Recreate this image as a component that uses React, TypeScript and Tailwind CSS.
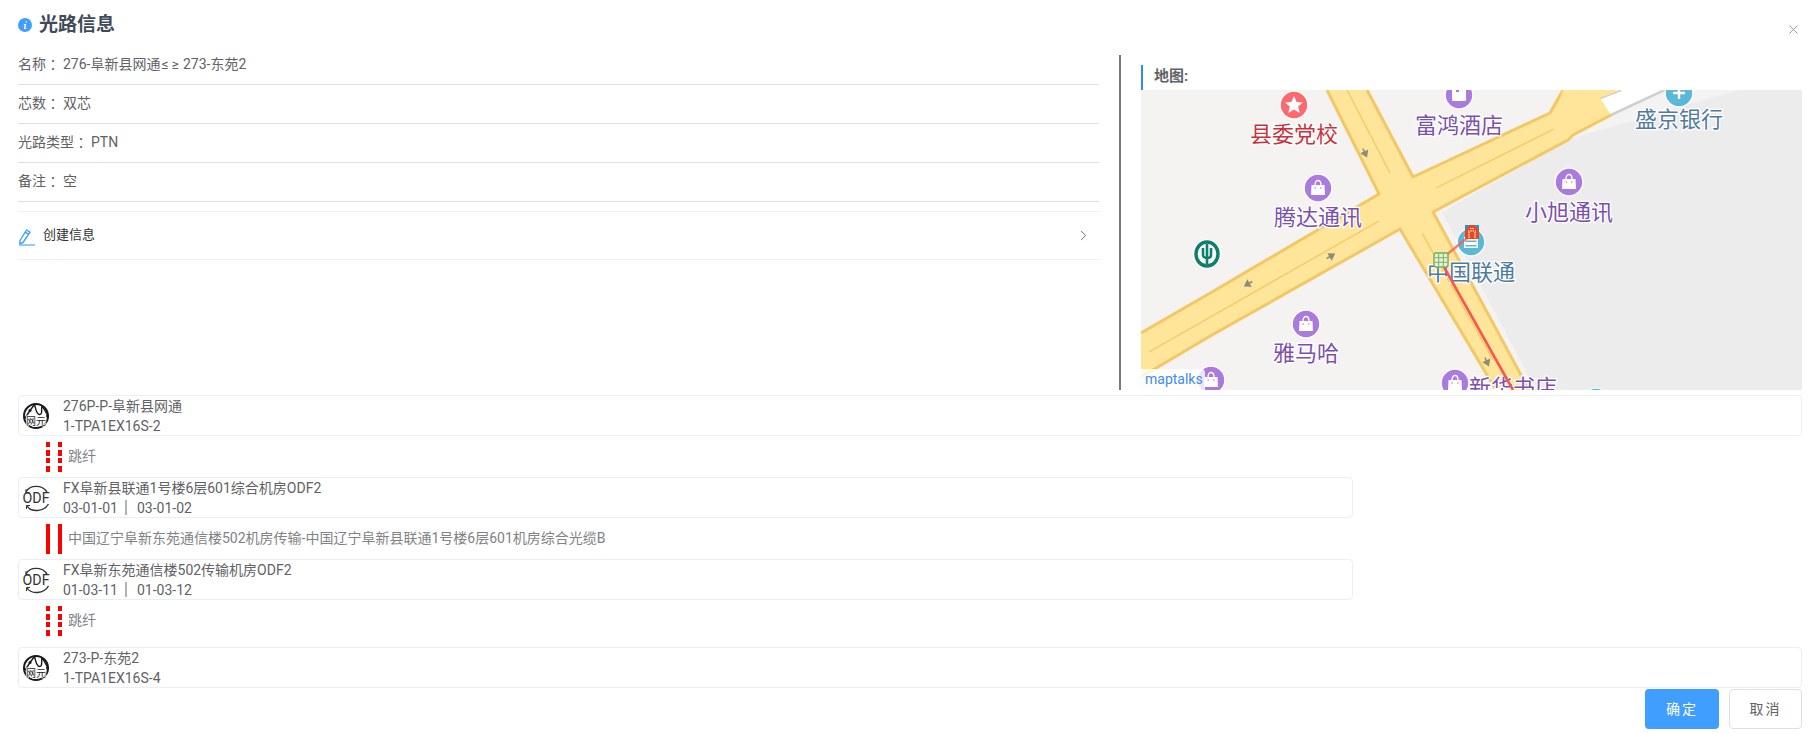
import React from "react";
import { X, ChevronRight } from "lucide-react";

const FONT = `Roboto, "Noto Sans CJK SC", sans-serif`;

function Poi({ x, y, c, glyph }: { x: number; y: number; c: string; glyph: "bag" | "bed" | "star" | "plus" | "card" }) {
  return (
    <g transform={`translate(${x} ${y})`}>
      <circle r={14.5} fill="#fff" opacity={0.9} />
      <circle r={13.2} fill={c} />
      {glyph === "bag" && (
        <g>
          <path d="M-6.5 -3 H6.5 L7 7 H-7 Z" fill="#fff" />
          <path d="M-3 -3 C-3 -9 3 -9 3 -3" fill="none" stroke="#fff" strokeWidth={1.4} />
          <circle cx={-2.8} cy={0} r={0.8} fill={c} />
          <circle cx={2.8} cy={0} r={0.8} fill={c} />
        </g>
      )}
      {glyph === "star" && (
        <path d="M0 -9 L2.6 -3 L9 -2.6 L4.2 1.6 L5.7 8 L0 4.6 L-5.7 8 L-4.2 1.6 L-9 -2.6 L-2.6 -3 Z" fill="#fff" />
      )}
      {glyph === "bed" && (
        <g fill="#fff">
          <rect x={-7} y={-7} width={14} height={13} rx={1} />
          <rect x={-3} y={-7} width={3} height={4} fill={c} />
        </g>
      )}
      {glyph === "plus" && <path d="M-6 0 H6 M0 -6 V6" stroke="#fff" strokeWidth={2.4} />}
      {glyph === "card" && (
        <g>
          <rect x={-7} y={-5} width={14} height={11} fill="#fff" />
          <rect x={-5.5} y={-1.5} width={11} height={6} fill={c} />
          <rect x={-5.5} y={0} width={11} height={3} fill="#fff" />
        </g>
      )}
    </g>
  );
}

function Label({ x, y, c, t }: { x: number; y: number; c: string; t: string }) {
  return (
    <text
      x={x}
      y={y - 2}
      textAnchor="middle"
      dominantBaseline="central"
      fontSize={22}
      fill={c}
      stroke="#fff"
      strokeWidth={2.5}
      paintOrder="stroke"
      style={{ fontFamily: `"Noto Sans CJK SC", sans-serif` }}
    >
      {t}
    </text>
  );
}

function Arrow({ x, y, r }: { x: number; y: number; r: number }) {
  return (
    <path
      transform={`translate(${x} ${y}) rotate(${r})`}
      d="M-5 0 H1 M-1 -3 L3.5 0 L-1 3 Z"
      stroke="#8f8c76"
      strokeWidth={1.5}
      fill="#8f8c76"
    />
  );
}

function MapDrawing() {
  const P = "#7b4fae";
  const pc = "#ab7ade";
  const B = "#4f7b9f";
  const roadFill = "#fee59a";
  const roadEdge = "#f4c765";
  return (
    <svg width="661" height="300" viewBox="0 0 661 300" className="block">
      <rect width="661" height="300" fill="#f4f3f1" />
      <path d="M301 122 L432 48 L598 0 H661 V300 H395 Z" fill="#ececec" />
      <path d="M459 8 L480 0 H525 L470 25 Z" fill="#fff" />
      <path d="M459 8 L480 0 M470 25 L530 -3" stroke="#cfcfcf" strokeWidth={2.5} fill="none" />
      <path
        d="M186 0 H226 L272 87 L409 23 L422 0 H480 L459 8 L470 25 L432 45 L427 50 L292 122 L388 300 H355 L259 139 L71 245 L0 287 V243 L71 202 L238 104 Z"
        fill={roadFill}
      />
      <path
        d="M186 0 L238 104 L71 202 L0 243 M226 0 L272 87 L409 23 L422 0 M470 25 L432 45 L427 50 L292 122 L388 300 M355 300 L259 139 L71 245 L0 287"
        fill="none"
        stroke={roadEdge}
        strokeWidth={3}
        strokeLinejoin="round"
      />
      <path d="M206 0 L249 83 M295 98 L413 39 M281 143 L352 270 M238 131 L8 262" fill="none" stroke={roadEdge} strokeWidth={1.3} />
      <path d="M422 0 L418 18 L459 8" fill={roadFill} />
      <Arrow x={224} y={63} r={65} />
      <Arrow x={190} y={166} r={-30} />
      <Arrow x={107} y={194} r={150} />
      <Arrow x={346} y={272} r={65} />

      <Poi x={153} y={15} c="#fb6a6f" glyph="star" />
      <Label x={153} y={44} c="#c9333f" t="县委党校" />
      <Poi x={318} y={5} c={pc} glyph="bed" />
      <Label x={318} y={35} c={P} t="富鸿酒店" />
      <Poi x={538} y={3} c="#5ab9d7" glyph="plus" />
      <Label x={538} y={29} c={B} t="盛京银行" />
      <Poi x={177} y={98} c={pc} glyph="bag" />
      <Label x={177} y={127} c={P} t="腾达通讯" />
      <Poi x={428} y={92} c={pc} glyph="bag" />
      <Label x={428} y={122} c={P} t="小旭通讯" />
      <Poi x={330} y={152} c="#5ab9d7" glyph="card" />
      <Label x={330} y={182} c={B} t="中国联通" />
      <g transform="translate(66 164)">
        <circle r={14.5} fill="#fff" opacity={0.9} />
        <ellipse rx={11} ry={12} fill="none" stroke="#0f7f6b" strokeWidth={3.4} />
        <path d="M0 -10 V10 M-4 -6 V1 C-4 3 -2 4 0 4 C2 4 4 3 4 1 V-6" stroke="#0f7f6b" strokeWidth={2.6} fill="none" />
      </g>
      <Poi x={165} y={234} c={pc} glyph="bag" />
      <Label x={165} y={263} c={P} t="雅马哈" />
      <Poi x={70} y={290} c={pc} glyph="bag" />
      <Poi x={314} y={293} c={pc} glyph="bag" />
      <Label x={372} y={297} c={P} t="新华书店" />
      <Poi x={455} y={312} c="#5ab9d7" glyph="card" />

      <path d="M330 145 L299 170" stroke="#f6605a" strokeWidth={2.4} opacity={0.8} />
      <path d="M299 170 L372 300" stroke="#f6574e" strokeWidth={2.6} />
      <g transform="translate(324 135)">
        <rect width={14} height={14} fill="#1d9ad6" />
        <path d="M0 5 L5 0 H9 L14 5 V14 H0 Z" fill="#e8481c" />
        <path d="M3 6 H11 M4 13 V6.5 M10 13 V6.5 M5 3.5 H9" stroke="#fff" strokeWidth={1.1} strokeDasharray="1.5 0.8" fill="none" />
      </g>
      <g transform="translate(293 163)">
        <rect width={14} height={14} rx={1.5} fill="#e6f0da" stroke="#6fae50" strokeWidth={1.4} />
        <path d="M4.7 1 V13 M9.3 1 V13 M1 4.7 H13 M1 9.3 H13" stroke="#6fae50" strokeWidth={0.9} />
      </g>
    </svg>
  );
}

function NetIcon() {
  return (
    <svg width="28" height="28" viewBox="0 0 28 28" className="shrink-0">
      <circle cx="14" cy="14" r="12" fill="#fff" stroke="#1a1a1a" strokeWidth="2" />
      <path d="M2.5 17 L8 8.5 L12.5 2.5 C14 7 14 12 17.5 12.5 C21 12.5 19 6 20 3.5 M20 3.5 L26 14" fill="none" stroke="#1a1a1a" strokeWidth="1.4" />
      <circle cx="8" cy="8.5" r="1.5" fill="#1a1a1a" />
      <circle cx="25.5" cy="14" r="1.5" fill="#1a1a1a" />
      <text x="14" y="23" textAnchor="middle" fontSize="10" fill="#1a1a1a" stroke="#fff" strokeWidth="1.5" paintOrder="stroke" style={{ fontFamily: `"Noto Sans CJK SC", sans-serif` }}>
        网元
      </text>
    </svg>
  );
}

function OdfIcon() {
  return (
    <svg width="28" height="28" viewBox="0 0 28 28" className="shrink-0">
      <path d="M4 8 C8 0.5 20 0.5 25 8" fill="none" stroke="#333" strokeWidth="1.4" />
      <path d="M26.5 20 C22 28 9 28.5 5 22" fill="none" stroke="#333" strokeWidth="1.4" />
      <path d="M4 5 L4 9 L8 9 M4.5 25 L4.5 21.5 L8 21.5" fill="none" stroke="#333" strokeWidth="1" />
      <text x="14" y="19" textAnchor="middle" fontSize="14" textLength="27" lengthAdjust="spacingAndGlyphs" fill="#333" style={{ fontFamily: "Roboto, sans-serif" }}>
        ODF
      </text>
    </svg>
  );
}

function Card({ wide, icon, l1, l2 }: { wide?: boolean; icon: React.ReactNode; l1: string; l2: React.ReactNode }) {
  return (
    <div
      className={`flex h-[41px] items-center rounded border border-[#ebeef5] pl-[3px] ${wide ? "w-[1784px]" : "w-[1335px]"}`}
    >
      {icon}
      <div className="ml-[13px] text-[14px] leading-[20px] text-[#606266]">
        <div>{l1}</div>
        <div>{l2}</div>
      </div>
    </div>
  );
}

function Ports({ a, b }: { a: string; b: string }) {
  return (
    <span className="flex items-center">
      {a}
      <span className="mx-[7px] h-[15px] w-[2px] bg-[#b0b2b6]" />
      <span className="ml-[3px]">{b}</span>
    </span>
  );
}

function Bar({ dashed }: { dashed?: boolean }) {
  if (!dashed) return <span className="h-[30px] w-[4px] bg-[#ff0000]" />;
  return (
    <span className="flex h-[30px] w-[4px] flex-col justify-between">
      <span className="h-[5px] bg-[#ff0000]" />
      <span className="h-[6px] bg-[#ff0000]" />
      <span className="h-[5px] bg-[#ff0000]" />
      <span className="h-[6px] bg-[#ff0000]" />
    </span>
  );
}

function Link({ dashed, text, h }: { dashed?: boolean; text: string; h: string }) {
  return (
    <div className={`flex items-start pl-[28px] pt-[6px] ${h}`}>
      <span className="flex gap-[8px]">
        <Bar dashed={dashed} />
        <Bar dashed={dashed} />
      </span>
      <span className="ml-[6px] text-[14px] leading-[28px] text-[#808285]">{text}</span>
    </div>
  );
}

function Row({ label, children }: { label: string; children: React.ReactNode }) {
  return (
    <div className="flex h-[39px] items-center border-b border-[#dcdfe6] pb-px text-[14px] text-[#606266]">
      <span>{label}</span>
      <span className="font-['Noto_Sans_CJK_TC']">：</span>
      <span className="ml-[3px]">{children}</span>
    </div>
  );
}

export default function App() {
  return (
    <div className="flex h-[734px] w-[1816px] flex-col overflow-hidden bg-white" style={{ fontFamily: FONT }}>
      <header className="flex h-[46px] shrink-0 items-center justify-between pl-[18px] pr-[15px]">
        <div className="flex items-center gap-[7px] pt-[4px]">
          <svg width="14" height="14" viewBox="0 0 14 14">
            <circle cx="7" cy="7" r="7" fill="#409eff" />
            <path d="M7.6 3.2 h1.3 v1.4 h-1.3 Z M6 6 H8.3 L7.4 10 H8.4 L8.2 11 H5.8 L6.7 7 H5.8 Z" fill="#fff" />
          </svg>
          <h1 className="text-[19px] font-bold leading-[24px] text-[#3f4a5a]">光路信息</h1>
        </div>
        <X size={15} className="mt-[12px] text-[#909399]" strokeWidth={1.5} />
      </header>

      <section className="flex h-[344px] shrink-0 pl-[18px] pr-[14px]">
        <div className="w-[1081px] shrink-0">
          <Row label="名称">
            276-阜新县网通<span className="px-[1px] tracking-[3px]">≤≥</span>273-东苑2
          </Row>
          <Row label="芯数">双芯</Row>
          <Row label="光路类型">PTN</Row>
          <Row label="备注">空</Row>
          <div className="mt-[9px] flex h-[49px] items-center justify-between border-y border-[#ebeef5] pr-[7px]">
            <span className="flex items-center">
              <svg width="18" height="18" viewBox="0 0 18 18" className="-mb-[2px]">
                <path d="M2 12.5 L8.5 2 L12 4.2 L5 14.5 L1.8 15.8 Z M7.2 4.2 L10.7 6.4" fill="none" stroke="#409eff" strokeWidth="1.4" strokeLinejoin="round" />
                <path d="M1 17 H17" stroke="#409eff" strokeWidth="1.1" />
              </svg>
              <span className="ml-[7px] pb-[2px] text-[13px] text-[#303133]">创建信息</span>
            </span>
            <ChevronRight size={17} className="text-[#606266]" strokeWidth={1.3} />
          </div>
        </div>

        <div className="ml-[20px] mt-[9px] h-[335px] w-[2px] shrink-0 bg-[#7a7a7a]" />

        <div className="ml-[20px] mt-[19px] w-[661px] shrink-0">
          <div className="flex h-[25px] items-center border-l-2 border-[#2d8cf0] pb-[3px] pl-[11px] text-[15px] font-bold text-[#606266]">
            地图:
          </div>
          <div className="relative h-[300px] overflow-hidden">
            <MapDrawing />
            <span className="absolute bottom-0 left-0 flex h-[21px] items-center rounded-tr bg-white/80 pl-[4px] pr-[2px] text-[14px] text-[#3e8cf0]">
              maptalks
            </span>
          </div>
        </div>
      </section>

      <main className="mt-[5px] flex flex-col pl-[18px]">
        <Card wide icon={<NetIcon />} l1="276P-P-阜新县网通" l2="1-TPA1EX16S-2" />
        <Link dashed text="跳纤" h="h-[41px]" />
        <Card icon={<OdfIcon />} l1="FX阜新县联通1号楼6层601综合机房ODF2" l2={<Ports a="03-01-01" b="03-01-02" />} />
        <Link text="中国辽宁阜新东苑通信楼502机房传输-中国辽宁阜新县联通1号楼6层601机房综合光缆B" h="h-[41px]" />
        <Card icon={<OdfIcon />} l1="FX阜新东苑通信楼502传输机房ODF2" l2={<Ports a="01-03-11" b="01-03-12" />} />
        <Link dashed text="跳纤" h="h-[47px]" />
        <Card wide icon={<NetIcon />} l1="273-P-东苑2" l2="1-TPA1EX16S-4" />
      </main>

      <footer className="mt-px flex justify-end gap-[10px] pr-[14px]">
        <button className="h-[40px] w-[74px] rounded bg-[#409eff] text-[14px] tracking-[2px] text-white">确定</button>
        <button className="h-[40px] w-[73px] rounded border border-[#dcdfe6] bg-white text-[14px] tracking-[2px] text-[#606266]">取消</button>
      </footer>
    </div>
  );
}
